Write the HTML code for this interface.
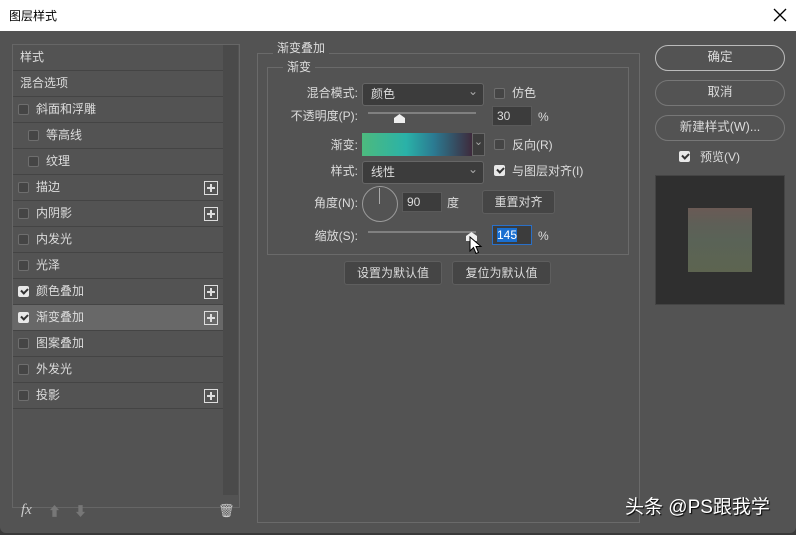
<!DOCTYPE html>
<html><head><meta charset="utf-8"><style>
*{margin:0;padding:0;box-sizing:border-box}
body{width:796px;height:535px;background:#3a3a3a;font-family:"Liberation Sans","Noto Sans CJK SC",sans-serif;font-size:12px;line-height:14px;color:#dcdcdc;position:relative;overflow:hidden}
.a{position:absolute}
.dlg{left:0;top:0;width:796px;height:533px;background:#535353;border-radius:0 0 6px 6px}
.title{left:0;top:0;width:796px;height:31px;background:#fff;color:#000;font-size:12px;padding:9px 0 0 9px}
.row{position:absolute;left:13px;width:210px;height:26px;border-bottom:1px solid #444;line-height:25px;padding-left:7px}
.cb{position:absolute;width:11px;height:11px;border:1px solid #6e6e6e;border-radius:2px;background:#454545}
.cbk{background:#e8e8e8;border-color:#e8e8e8}
.cbk:after{content:"";position:absolute;left:2px;top:1px;width:5px;height:3px;border-left:2px solid #333;border-bottom:2px solid #333;transform:rotate(-45deg)}
.plus{position:absolute;left:191px;top:6px;width:14px;height:14px;border:1px solid #ddd}
.plus:before{content:"";position:absolute;left:2px;top:5px;width:8px;height:2px;background:#ddd}
.plus:after{content:"";position:absolute;left:5px;top:2px;width:2px;height:8px;background:#ddd}
.box{border:1px solid #6a6a6a}
.sel{background:#3c3c3c;border:1px solid #666;border-radius:3px;height:23px;line-height:21px;padding-left:8px}
.sel:after{content:"⌄";position:absolute;right:5px;top:-3px;color:#aaa;font-size:12px}
.inp{background:#3c3c3c;border:1px solid #5a5a5a;height:20px;line-height:18px;padding-left:4px}
.btn{background:#454545;border:1px solid #5e5e5e;border-radius:3px;text-align:center;height:24px;line-height:22px}
.rb{border:1.5px solid #8a8a8a;border-radius:13px;text-align:center;height:26px;line-height:23px;font-size:12.5px}
.lbl{text-align:right}
.track{height:2px;background:#808080}
.th{width:11px;height:9px;background:#eee;clip-path:polygon(50% 0,100% 45%,100% 100%,0 100%,0 45%)}
</style></head><body>
<div class="a dlg"></div>
<div class="a title">图层样式</div>
<div class="a" style="left:772px;top:7px;width:16px;height:16px">
<svg width="16" height="16"><path d="M2 2L14 14M14 2L2 14" stroke="#000" stroke-width="1.3"/></svg></div>

<div class="a" style="left:12px;top:44px;width:228px;height:464px;border:1px solid #666"></div>
<div class="a" style="left:223px;top:45px;width:15px;height:450px;background:#4a4a4a"></div>
<div class="row" style="top:45px">样式</div>
<div class="row" style="top:71px">混合选项</div>
<div class="row" style="top:97px;padding-left:23px"><span class="cb" style="left:5px;top:7px"></span>斜面和浮雕</div>
<div class="row" style="top:123px;padding-left:33px"><span class="cb" style="left:15px;top:7px"></span>等高线</div>
<div class="row" style="top:149px;padding-left:33px"><span class="cb" style="left:15px;top:7px"></span>纹理</div>
<div class="row" style="top:175px;padding-left:23px"><span class="cb" style="left:5px;top:7px"></span>描边<span class="plus"></span></div>
<div class="row" style="top:201px;padding-left:23px"><span class="cb" style="left:5px;top:7px"></span>内阴影<span class="plus"></span></div>
<div class="row" style="top:227px;padding-left:23px"><span class="cb" style="left:5px;top:7px"></span>内发光</div>
<div class="row" style="top:253px;padding-left:23px"><span class="cb" style="left:5px;top:7px"></span>光泽</div>
<div class="row" style="top:279px;padding-left:23px"><span class="cb cbk" style="left:5px;top:7px"></span>颜色叠加<span class="plus"></span></div>
<div class="row" style="top:305px;padding-left:23px;background:#686868"><span class="cb cbk" style="left:5px;top:7px"></span>渐变叠加<span class="plus"></span></div>
<div class="row" style="top:331px;padding-left:23px"><span class="cb" style="left:5px;top:7px"></span>图案叠加</div>
<div class="row" style="top:357px;padding-left:23px"><span class="cb" style="left:5px;top:7px"></span>外发光</div>
<div class="row" style="top:383px;padding-left:23px"><span class="cb" style="left:5px;top:7px"></span>投影<span class="plus"></span></div>
<div class="a" style="left:21px;top:503px;font-style:italic;font-family:'Liberation Serif',serif;font-size:15px;color:#ccc">fx</div>
<div class="a" style="left:48px;top:505px;color:#777;font-size:13px">⬆</div>
<div class="a" style="left:74px;top:505px;color:#777;font-size:13px">⬇</div>
<div class="a" style="left:218px;top:504px;color:#ccc;font-size:13px">🗑</div>

<div class="a box" style="left:257px;top:53px;width:383px;height:470px"></div>
<div class="a" style="left:273px;top:41px;background:#535353;padding:0 4px">渐变叠加</div>
<div class="a box" style="left:267px;top:67px;width:362px;height:188px"></div>
<div class="a" style="left:283px;top:60px;background:#535353;padding:0 4px">渐变</div>

<div class="a lbl" style="left:270px;top:86px;width:88px">混合模式:</div>
<div class="a sel" style="left:362px;top:83px;width:122px">颜色</div>
<div class="a cb" style="left:494px;top:88px"></div><div class="a" style="left:512px;top:86px">仿色</div>

<div class="a lbl" style="left:270px;top:109px;width:88px">不透明度(P):</div>
<div class="a track" style="left:368px;top:112px;width:108px"></div>
<div class="a th" style="left:394px;top:114px"></div>
<div class="a inp" style="left:492px;top:106px;width:40px">30</div>
<div class="a" style="left:538px;top:110px">%</div>

<div class="a lbl" style="left:270px;top:138px;width:88px">渐变:</div>
<div class="a" style="left:362px;top:133px;width:110px;height:23px;background:linear-gradient(90deg,#4dba7e,#2ab2a8 40%,#2b7b92 65%,#3e2a3c)"></div>
<div class="a" style="left:472px;top:133px;width:13px;height:23px;background:#3c3c3c;border:1px solid #666;color:#aaa;font-size:11px;text-align:center;line-height:16px">⌄</div>
<div class="a cb" style="left:494px;top:139px"></div><div class="a" style="left:512px;top:138px">反向(R)</div>

<div class="a lbl" style="left:270px;top:164px;width:88px">样式:</div>
<div class="a sel" style="left:362px;top:161px;width:122px">线性</div>
<div class="a cb cbk" style="left:494px;top:165px"></div><div class="a" style="left:512px;top:164px">与图层对齐(I)</div>

<div class="a lbl" style="left:270px;top:196px;width:88px">角度(N):</div>
<div class="a" style="left:362px;top:186px;width:36px;height:36px;border:1px solid #9a9a9a;border-radius:50%"></div>
<div class="a" style="left:379px;top:188px;width:1px;height:16px;background:#aaa"></div>
<div class="a inp" style="left:402px;top:192px;width:40px">90</div>
<div class="a" style="left:447px;top:196px">度</div>
<div class="a btn" style="left:482px;top:190px;width:73px">重置对齐</div>

<div class="a lbl" style="left:270px;top:229px;width:88px">缩放(S):</div>
<div class="a track" style="left:368px;top:231px;width:108px"></div>
<div class="a th" style="left:466px;top:232px"></div>
<svg class="a" style="left:469px;top:236px" width="14" height="20"><path d="M1 1L1 15L4.5 11.5L7 17.5L9.5 16.5L7 10.5L12 10.5Z" fill="#fff" stroke="#000" stroke-width="1"/></svg>
<div class="a inp" style="left:492px;top:225px;width:40px;border-color:#2a70c8"><span style="background:#1a6fd0;color:#fff">145</span></div>
<div class="a" style="left:538px;top:229px">%</div>

<div class="a btn" style="left:344px;top:261px;width:98px">设置为默认值</div>
<div class="a btn" style="left:452px;top:261px;width:99px">复位为默认值</div>

<div class="a rb" style="left:655px;top:45px;width:130px;border-color:#bbb">确定</div>
<div class="a rb" style="left:655px;top:80px;width:130px;border-color:#777">取消</div>
<div class="a rb" style="left:655px;top:115px;width:130px;border-color:#777">新建样式(W)...</div>
<div class="a cb cbk" style="left:679px;top:151px"></div><div class="a" style="left:700px;top:150px">预览(V)</div>
<div class="a" style="left:655px;top:175px;width:130px;height:130px;background:#2f2f2f;border:1px solid #444"></div>
<div class="a" style="left:688px;top:208px;width:64px;height:64px;background:linear-gradient(180deg,#6a5a55,#5e5f57 25%,#5a6357 50%,#5d6450)"></div>

<div class="a" style="left:625px;top:497px;color:#fff;font-size:19px;line-height:22px;text-shadow:1px 1px 1px #000">头条 @PS跟我学</div>
</body></html>
